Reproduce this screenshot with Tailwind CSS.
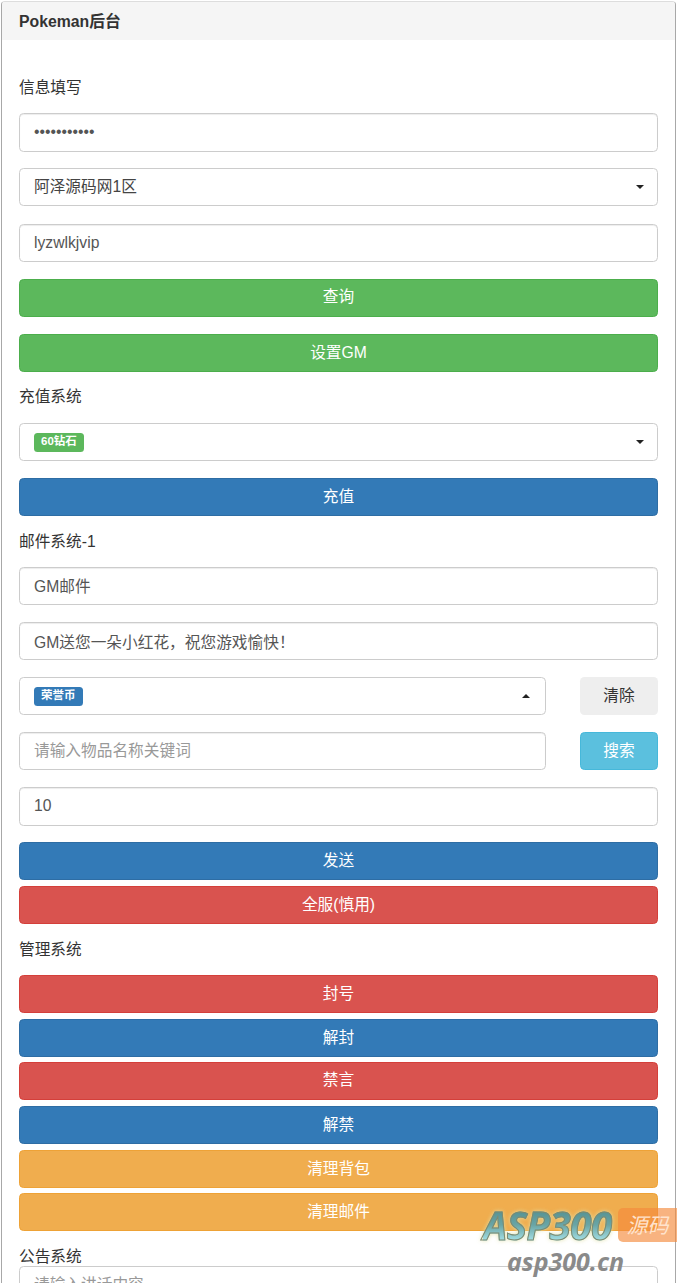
<!DOCTYPE html>
<html lang="en">
<head>
  <meta charset="UTF-8" />
  <meta name="viewport" content="width=device-width, initial-scale=1.0"/>
  <title>Pokeman后台</title>
  <script src="https://cdn.jsdelivr.net/npm/@tailwindcss/browser@4"></script>
</head>
<body class="bg-white h-[1283px] overflow-hidden relative text-[15.7px] text-[#333] font-['Liberation_Sans','Noto_Sans_CJK_SC',sans-serif]">

  <div class="ml-[1px] mt-[1px] w-[675px] h-[1282px] overflow-hidden border border-b-0 border-[#a8a8a8] border-t-[#ddd] rounded-t-[4px]">
    <div class="h-[38px] bg-[#f5f5f5] pl-[17px] pt-[1px] flex items-center font-bold text-[15.8px] leading-none">Pokeman后台</div>

    <div class="pl-[17px] pr-[17px] pt-[37px]">
      <!-- 信息填写 -->
      <div class="h-[22px] leading-[22px] mb-[14px]">信息填写</div>
      <input type="password" value="lyzwlkjvip1" class="block w-full h-[39px] mb-[16px] px-[14px] pb-[2px] bg-white border border-[#ccc] rounded-[4.5px] text-[#555] shadow-[inset_0_1px_1px_rgba(0,0,0,0.075)]" />
      <div class="flex items-center justify-between h-[38px] mb-[18px] pl-[14px] pr-[13px] bg-white border border-[#ccc] rounded-[4.5px] text-[#444]">
        <span>阿泽源码网1区</span>
        <span class="w-0 h-0 border-x-[4px] border-x-transparent border-t-[4px] border-t-[#222]"></span>
      </div>
      <input type="text" value="lyzwlkjvip" class="block w-full h-[38px] mb-[17px] px-[14px] bg-white border border-[#ccc] rounded-[4.5px] text-[#555] shadow-[inset_0_1px_1px_rgba(0,0,0,0.075)]" />
      <button class="block w-full h-[38px] mb-[17px] pb-[2px] bg-[#5cb85c] border border-[#4cae4c] rounded-[4.5px] text-white">查询</button>
      <button class="block w-full h-[38px] mb-[14px] bg-[#5cb85c] border border-[#4cae4c] rounded-[4.5px] text-white">设置GM</button>

      <!-- 充值系统 -->
      <div class="h-[22px] leading-[22px] mb-[15px]">充值系统</div>
      <div class="flex items-center justify-between h-[38px] mb-[17px] pl-[14px] pr-[13px] bg-white border border-[#ccc] rounded-[4.5px]">
        <span class="h-[19px] px-[7px] flex items-center bg-[#5cb85c] rounded-[3.5px] text-white text-[11.5px] font-bold leading-none">60钻石</span>
        <span class="w-0 h-0 border-x-[4px] border-x-transparent border-t-[4px] border-t-[#222]"></span>
      </div>
      <button class="block w-full h-[38px] mb-[15px] bg-[#337ab7] border border-[#2e6da4] rounded-[4.5px] text-white">充值</button>

      <!-- 邮件系统 -->
      <div class="h-[22px] leading-[22px] mb-[14px]">邮件系统-1</div>
      <input type="text" value="GM邮件" class="block w-full h-[38px] mb-[17px] px-[14px] pb-[2px] bg-white border border-[#ccc] rounded-[4.5px] text-[#555] shadow-[inset_0_1px_1px_rgba(0,0,0,0.075)]" />
      <input type="text" value="GM送您一朵小红花，祝您游戏愉快！" class="block w-full h-[38px] mb-[17px] px-[14px] bg-white border border-[#ccc] rounded-[4.5px] text-[#555] shadow-[inset_0_1px_1px_rgba(0,0,0,0.075)]" />
      <div class="flex justify-between mb-[17px]">
        <div class="flex items-center justify-between w-[527px] h-[38px] pl-[14px] pr-[15px] bg-white border border-[#ccc] rounded-[4.5px]">
          <span class="h-[19px] px-[7px] flex items-center bg-[#337ab7] rounded-[3.5px] text-white text-[11.5px] font-bold leading-none">荣誉币</span>
          <span class="w-0 h-0 border-x-[4px] border-x-transparent border-b-[4px] border-b-[#222]"></span>
        </div>
        <button class="w-[78px] h-[38px] bg-[#eee] rounded-[4.5px] text-[#333]">清除</button>
      </div>
      <div class="flex justify-between mb-[17px]">
        <input type="text" placeholder="请输入物品名称关键词" class="block w-[527px] h-[38px] px-[14px] bg-white border border-[#ccc] rounded-[4.5px] text-[#555] placeholder:text-[#999] shadow-[inset_0_1px_1px_rgba(0,0,0,0.075)]" />
        <button class="w-[78px] h-[38px] bg-[#5bc0de] border border-[#46b8da] rounded-[4.5px] text-white">搜索</button>
      </div>
      <input type="text" value="10" class="block w-full h-[39px] mb-[16px] px-[14px] pb-[2px] bg-white border border-[#ccc] rounded-[4.5px] text-[#555] shadow-[inset_0_1px_1px_rgba(0,0,0,0.075)]" />
      <button class="block w-full h-[38px] mb-[6px] bg-[#337ab7] border border-[#2e6da4] rounded-[4.5px] text-white">发送</button>
      <button class="block w-full h-[38px] mb-[15px] bg-[#d9534f] border border-[#d43f3a] rounded-[4.5px] text-white">全服(慎用)</button>

      <!-- 管理系统 -->
      <div class="h-[22px] leading-[22px] mb-[14px]">管理系统</div>
      <button class="block w-full h-[38px] mb-[6px] bg-[#d9534f] border border-[#d43f3a] rounded-[4.5px] text-white">封号</button>
      <button class="block w-full h-[38px] mb-[5px] bg-[#337ab7] border border-[#2e6da4] rounded-[4.5px] text-white">解封</button>
      <button class="block w-full h-[38px] mb-[6px] pb-[2px] bg-[#d9534f] border border-[#d43f3a] rounded-[4.5px] text-white">禁言</button>
      <button class="block w-full h-[38px] mb-[6px] bg-[#337ab7] border border-[#2e6da4] rounded-[4.5px] text-white">解禁</button>
      <button class="block w-full h-[38px] mb-[5px] bg-[#f0ad4e] border border-[#eea236] rounded-[4.5px] text-white">清理背包</button>
      <button class="block w-full h-[38px] mb-[15px] bg-[#f0ad4e] border border-[#eea236] rounded-[4.5px] text-white">清理邮件</button>

      <!-- 公告系统 -->
      <div class="h-[20px] leading-[22px]">公告系统</div>
      <input type="text" placeholder="请输入讲话内容" class="block w-full h-[38px] px-[14px] bg-white border border-[#ccc] rounded-[4.5px] text-[#555] placeholder:text-[#999]" />
    </div>
  </div>

  <!-- watermark -->
  <div class="absolute left-[480px] top-[1200px] w-[197px] h-[83px]">
    <span class="absolute left-[3px] top-[5px] text-[38.5px] leading-[40px] font-bold italic tracking-[-0.5px] font-['Open_Sans',sans-serif] text-transparent bg-clip-text bg-gradient-to-b from-[#4d8a8c] via-[#6aa5a5] to-[#b4f0f8] [-webkit-text-stroke:1px_#7d8a70] drop-shadow-[0_0_2px_rgba(225,225,170,0.9)]">ASP300</span>
    <span class="absolute left-[138px] top-[8px] w-[59px] h-[34px] bg-[#f58a3c]/65 rounded-l-[5px] flex items-center justify-center text-[21px] italic text-[#ffe3cc] leading-none">源码</span>
    <span class="absolute left-[27px] top-[47px] text-[25px] leading-[28px] font-bold italic text-[#8a8a8a] font-['Open_Sans',sans-serif]">asp300.cn</span>
  </div>

</body>
</html>
